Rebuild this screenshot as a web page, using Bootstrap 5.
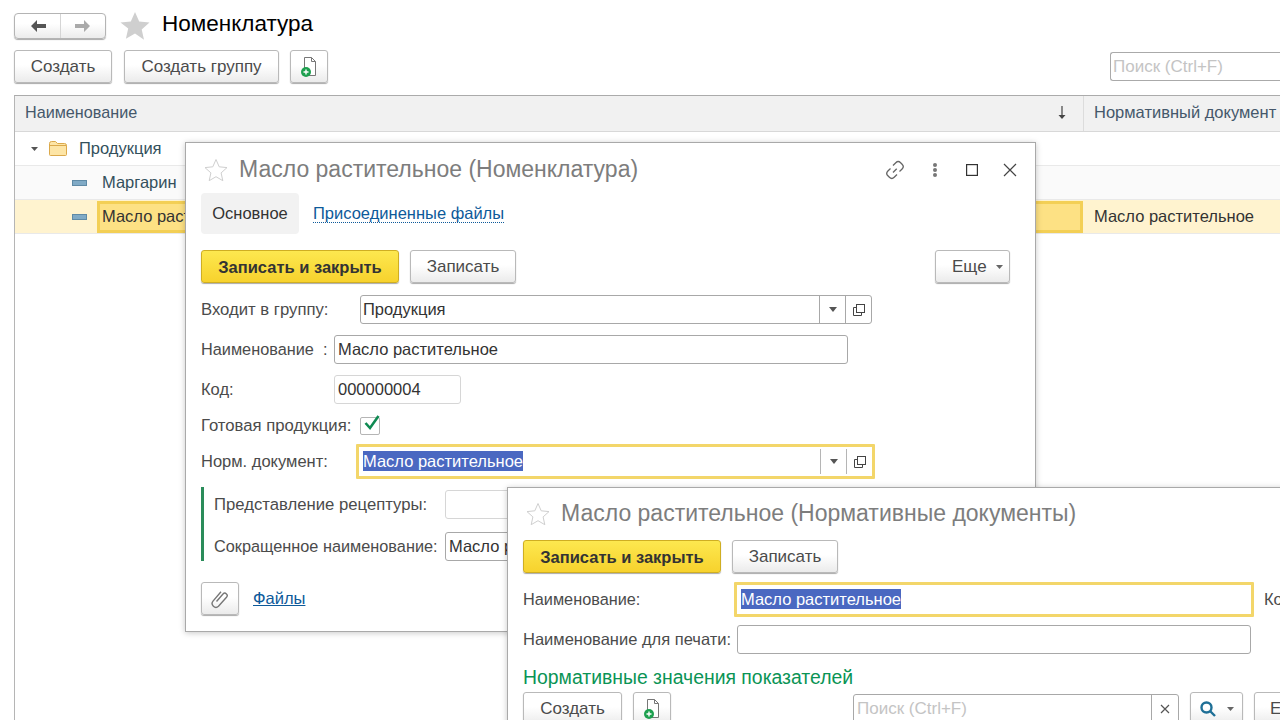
<!DOCTYPE html>
<html lang="ru">
<head>
<meta charset="utf-8">
<title>Номенклатура</title>
<link href="https://cdn.jsdelivr.net/npm/bootstrap@5.3.0/dist/css/bootstrap.min.css" rel="stylesheet">
<style>
html,body{height:720px;overflow:hidden;background:#fff}
body{font-family:"Liberation Sans",Arial,sans-serif;font-size:16.5px;color:#4b4b4b;position:relative}
.pg{padding:13px 0 0 14px;height:720px}
.topbar{height:25px;margin-bottom:12px}
.navpair{width:92px;height:26px;border:1px solid #b4b4b4;border-radius:4px;background:linear-gradient(#fff 40%,#ececec);box-shadow:0 1px 1px #aaa}
.navpair>div{flex:1;height:100%}
.navpair>div:first-child{border-right:1px solid #d5d5d5;flex:0 0 46px}
.pgtitle{font-size:22.5px;color:#000;margin-left:12px;line-height:22px;padding-bottom:4px}
.bstar{margin-left:14px}
.b1c{height:33px;padding:0 16px;border:1px solid #b9b9b9;border-radius:3px;background:linear-gradient(#fff 45%,#ebebeb);box-shadow:0 1px 1px #aaa;color:#4b4b4b;font-size:17px;line-height:32px;white-space:nowrap;flex:none}
.b1c:hover{color:#4b4b4b}
.iconb{width:38px;padding:0;display:flex;align-items:center;justify-content:center}
.btn-save{background:linear-gradient(#fde84f,#f7d22d);border-color:#cfae22;color:#333;font-weight:700;font-size:16.5px;padding:0;width:198px}
.toolrow{height:33px;margin-bottom:12px;padding-right:0}
.srch{width:170px;height:29px;margin-left:auto;margin-top:2px;border:1px solid #aaa;border-right:0;border-radius:3px 0 0 3px;color:#c4c4c4;padding-left:2px;line-height:27px;font-size:17px;white-space:nowrap}
.grid{border-left:1px solid #b5b5b5;border-top:1px solid #ababab;height:640px}
.ghead{height:36px;background:#f1f1f1;border-bottom:1px solid #d8d8d8;color:#45586b}
.gc1{width:1068px;flex:none;padding-left:10px;position:relative}
.gc2{flex:1;padding-left:10px;white-space:nowrap;border-left:1px solid #dcdcdc}
.ghead>div{line-height:32px;height:100%}
.ghead>.gc1{font-size:16.2px}
.grow{height:34px;line-height:32px;border-bottom:1px solid #e9e9e9;color:#33505c}
.grow .gc1>span{padding-bottom:2px}
.grow.alt{background:#fafafa}
.grow.sel{background:#fff3cf;color:#333}
.grow.sel .gc1{padding:0;height:33px}
.grow.sel .gc2{line-height:33px;padding-left:11px}
.selcell{margin-left:82px;width:986px;height:32px;background:#fde184;border:3px solid #f3cf55;line-height:25px;padding-left:2px}
.sortar{position:absolute;right:16px;top:10px}
.gtree1{padding-left:15px;display:flex;align-items:center;gap:0}
.gtree2{padding-left:57px;display:flex;align-items:center}
.win{position:absolute;background:#fff;border:1px solid #a9a9a9;box-shadow:0 1px 6px rgba(0,0,0,.22)}
.w1{left:185px;top:142px;width:851px;height:490px;padding:14px 15px 0;z-index:2}
.w2{left:507px;top:487px;width:800px;height:300px;padding:13px 15px 0;z-index:3}
.whead{height:26px}
.wtitle{font-size:23px;color:#7d7d7d;margin-left:11px;line-height:22px;white-space:nowrap;padding-bottom:3px}
.wtools{margin-left:auto;margin-right:3px;gap:0}
.wtab{width:98px;height:41px;background:#f2f2f2;border-radius:4px;color:#333;line-height:41px;text-align:center}
.wlink{color:#0d5a9a;text-decoration:none;border-bottom:1px dotted #0d5a9a;line-height:18px;margin-left:14px}
.tabrow{margin-top:10px;margin-bottom:16px}
.wbtns{gap:11px;height:33px;margin-bottom:12px}
.w2 .wbtns{margin-top:13px;margin-bottom:9px}
.frow{display:flex;align-items:center;height:29px;margin-bottom:11px;white-space:nowrap}
.flab{flex:none}
.lab-narrow{font-size:16.3px}
.lab-wide{font-size:16.7px}
.lab-chk{padding-top:2px}
.l133{width:133px}.l159{width:159px}
.inp{height:29px;border:1px solid #a8a8a8;border-radius:3px;padding-left:3px;line-height:27px;color:#333;display:flex;background:#fff;flex:none}
.inp.tight{padding-left:2px}
.inp.soft{border-color:#d6d6d6}
.inp>span.t{flex:1}
.seg{width:26px;border-left:1px solid #a8a8a8;flex:none;display:flex;align-items:center;justify-content:center}
.focus{height:35px;border:3px solid #f3d66a;border-radius:1px;padding-left:4px;line-height:29px;color:#333;display:flex;flex:none;background:#fff}
.focus>span.t{flex:1}
.focus .seg{border-left-color:#b5b5b5;margin:2px 0 2px;height:auto}
.selt{background:#4a68c1;color:#fff;line-height:20px;align-self:center;margin-bottom:2px}
.chk{width:20px;height:18px;border:1px solid #b5b5b5;border-radius:2px;position:relative;flex:none;margin-top:2px}
.chk svg{position:absolute;left:1px;top:-5px}
.gbox{border-left:3px solid #2a8c5a;padding-left:10px;margin-top:8px;height:74px;padding-top:3px}
.gbox .frow{margin-bottom:13px}
.l231{width:231px}
.foot{margin-top:21px;height:33px;gap:14px}
.flink{color:#0d5a9a;text-decoration:underline}
.ghd{color:#0a9455;font-size:19.4px;line-height:20px;margin-top:13px;white-space:nowrap}
.w2 .r1{height:35px;margin-bottom:8px}
.w2 .r2{margin-bottom:0}
.l211{width:211px}
.l214{width:214px}
.lastr{margin-top:5px;height:33px;gap:11px}
.srch2{width:326px;margin-left:171px;margin-top:2px;flex:none}
.srch2 .t{color:#c4c4c4;font-size:17px}
.seg2{width:27px}
.bsrch{width:53px;padding:0;display:flex;align-items:center;justify-content:center;gap:10px}
.kod{margin-left:10px;color:#4b4b4b}
.eshe{margin-left:auto;margin-right:10px;width:75px;padding:0 0 0 16px;display:flex;align-items:center;gap:9px}
.btn-a{width:98px;padding:0;margin-right:12px}
.btn-b{width:155px;padding:0;margin-right:11px}
</style>
</head>
<body>
<div class="pg">
  <div class="d-flex align-items-center topbar">
    <div class="d-flex navpair">
      <div class="d-flex align-items-center justify-content-center"><svg width="18" height="14" viewBox="0 0 18 14"><path d="M8 1 2 7l6 6V9h9V5H8z" fill="#555"/></svg></div>
      <div class="d-flex align-items-center justify-content-center"><svg width="18" height="14" viewBox="0 0 18 14"><path d="M10 1l6 6-6 6V9H1V5h9z" fill="#aaa"/></svg></div>
    </div>
    <svg class="bstar" width="30" height="30" viewBox="0 0 30 30"><path d="M15 1l4.200 9.600 10.300 1-7.800 6.900 2.300 10.200L15 22.400 5.900 27.700l2.300-10.200L.5 11.600l10.300-1z" fill="#cfcfcf"/></svg>
    <div class="pgtitle">Номенклатура</div>
  </div>
  <div class="d-flex toolrow">
    <a class="btn b1c btn-a">Создать</a>
    <a class="btn b1c btn-b">Создать группу</a>
    <a class="btn b1c iconb"><svg width="18" height="22" viewBox="0 0 18 22"><path d="M4.500 1.500h7l4 4v14h-11z" fill="#fff" stroke="#777"/><path d="M11.500 1.500v4h4" fill="none" stroke="#777"/><circle cx="6" cy="16" r="5" fill="#1ea04f"/><path d="M3.500 16h5M6 13.500v5" stroke="#fff" stroke-width="1.400"/></svg></a>
    <div class="srch">Поиск (Ctrl+F)</div>
  </div>
  <div class="grid">
    <div class="d-flex ghead">
      <div class="gc1">Наименование<svg class="sortar" width="10" height="14" viewBox="0 0 10 14"><path d="M5 0v11" stroke="#444" stroke-width="1.200"/><path d="M1.500 9h7L5 13z" fill="#444"/></svg></div>
      <div class="gc2">Нормативный документ</div>
    </div>
    <div class="d-flex grow">
      <div class="gc1 gtree1"><svg width="10" height="6" viewBox="0 0 10 6"><path d="M1 1h7L4.500 5z" fill="#555"/></svg><svg style="margin-left:8px" width="20" height="17" viewBox="0 0 20 17"><path d="M1.500 3.500q0-2 2-2h4l2 2h7q2 0 2 2v9q0 1-1 1h-15q-1 0-1-1z" fill="#fde5a6" stroke="#dba94b"/><path d="M1.500 5.500h17" stroke="#dba94b"/></svg><span style="margin-left:11px">Продукция</span></div>
    </div>
    <div class="d-flex grow alt">
      <div class="gc1 gtree2"><svg width="15" height="6" viewBox="0 0 15 6"><rect x=".5" y=".5" width="14" height="5" fill="#80aac6" stroke="#5f8aa6"/></svg><span style="margin-left:15px">Маргарин</span></div>
    </div>
    <div class="d-flex grow sel">
      <div class="gc1 d-flex align-items-center"><svg style="margin-left:57px;margin-right:10px;flex:none" width="15" height="6" viewBox="0 0 15 6"><rect x=".5" y=".5" width="14" height="5" fill="#80aac6" stroke="#5f8aa6"/></svg><div class="selcell" style="margin-left:0">Масло растительное</div></div>
      <div class="gc2" style="border:0">Масло растительное</div>
    </div>
  </div>
</div>

<div class="win w1">
  <div class="d-flex align-items-center whead" style="padding-left:3px">
    <svg width="24" height="24" viewBox="0 0 24 24"><path d="M12 1.500l3.200 7.300 7.800.8-5.900 5.300 1.700 7.800L12 18.700l-6.800 4 1.700-7.800L1 9.600l7.800-.8z" fill="#fff" stroke="#cfcfcf"/></svg>
    <div class="wtitle">Масло растительное (Номенклатура)</div>
    <div class="d-flex align-items-center wtools">
      <svg width="20" height="20" viewBox="0 0 20 20" fill="none" stroke="#666" stroke-width="1.300"><path d="M8 5.500l2.800-2.800a3.400 3.400 0 0 1 4.800 0l1.500 1.500a3.400 3.400 0 0 1 0 4.800L14.500 11.500"/><path d="M11.700 8.700 8 12.500"/><path d="M12 14.500l-2.800 2.800a3.400 3.400 0 0 1-4.800 0l-1.500-1.500a3.400 3.400 0 0 1 0-4.800L5.500 8.500"/></svg>
      <svg style="margin-left:27px" width="6" height="16" viewBox="0 0 6 16"><circle cx="3" cy="3" r="2" fill="#777"/><circle cx="3" cy="8" r="2" fill="#777"/><circle cx="3" cy="13" r="2" fill="#777"/></svg>
      <svg style="margin-left:28px" width="12" height="12" viewBox="0 0 12 12"><rect x=".6" y=".6" width="10.800" height="10.800" fill="none" stroke="#333" stroke-width="1.200"/></svg>
      <svg style="margin-left:25px" width="14" height="14" viewBox="0 0 14 14"><path d="M1 1l12 12M13 1 1 13" stroke="#444" stroke-width="1.200"/></svg>
    </div>
  </div>
  <div class="d-flex align-items-center tabrow">
    <div class="wtab">Основное</div>
    <a class="wlink" href="#">Присоединенные файлы</a>
  </div>
  <div class="d-flex wbtns">
    <a class="btn b1c btn-save">Записать и закрыть</a>
    <a class="btn b1c" style="width:106px;padding:0">Записать</a>
    <a class="btn b1c eshe"><span>Еще</span><svg width="7" height="4" viewBox="0 0 7 4"><path d="M0 0h7L3.500 4z" fill="#666"/></svg></a>
  </div>
  <div class="frow"><div class="flab l159 lab-wide">Входит в группу:</div>
    <div class="inp tight" style="width:512px"><span class="t">Продукция</span><span class="seg"><svg width="8" height="5" viewBox="0 0 8 5"><path d="M0 0h8L4 5z" fill="#555"/></svg></span><span class="seg"><svg width="12" height="12" viewBox="0 0 12 12" fill="none" stroke="#444"><rect x="3.500" y=".5" width="8" height="8"/><path d="M3 3.500H.5v8h8V9"/></svg></span></div></div>
  <div class="frow"><div class="flab l133 lab-narrow">Наименование&nbsp;&nbsp;:</div>
    <div class="inp" style="width:514px"><span class="t">Масло растительное</span></div></div>
  <div class="frow" style="margin-bottom:10px"><div class="flab l133">Код:</div>
    <div class="inp soft" style="width:127px"><span class="t">000000004</span></div></div>
  <div class="frow" style="height:22px;margin-bottom:8px"><div class="flab l159 lab-wide lab-chk">Готовая продукция:</div>
    <div class="chk"><svg width="20" height="20" viewBox="0 0 20 20"><path d="M3.500 10l4.500 5 8.500-12" fill="none" stroke="#0f8a52" stroke-width="2.600"/></svg></div></div>
  <div class="frow" style="height:35px;margin-bottom:0"><div class="flab" style="width:155px">Норм. документ:</div>
    <div class="focus" style="width:519px"><span class="t d-flex"><span class="selt">Масло растительное</span></span><span class="seg"><svg width="8" height="5" viewBox="0 0 8 5"><path d="M0 0h8L4 5z" fill="#555"/></svg></span><span class="seg"><svg width="12" height="12" viewBox="0 0 12 12" fill="none" stroke="#444"><rect x="3.500" y=".5" width="8" height="8"/><path d="M3 3.500H.5v8h8V9"/></svg></span></div></div>
  <div class="gbox">
    <div class="frow"><div class="flab l231 lab-wide">Представление рецептуры:</div><div class="inp soft" style="width:200px"></div></div>
    <div class="frow"><div class="flab l231 lab-narrow">Сокращенное наименование:</div><div class="inp" style="width:200px"><span class="t">Масло растительное</span></div></div>
  </div>
  <div class="d-flex align-items-center foot">
    <a class="btn b1c iconb"><svg width="20" height="20" viewBox="0 0 20 20" fill="none" stroke="#777" stroke-width="1.400"><path d="M6.500 12.500 13 5a2.400 2.400 0 0 1 3.500 3.300l-8 9a3.800 3.800 0 0 1-5.500-5.200l8-9.300"/></svg></a>
    <a class="flink" href="#">Файлы</a>
  </div>
</div>

<div class="win w2">
  <div class="d-flex align-items-center whead" style="padding-left:3px">
    <svg width="24" height="24" viewBox="0 0 24 24"><path d="M12 1.500l3.200 7.300 7.800.8-5.900 5.300 1.700 7.800L12 18.700l-6.800 4 1.700-7.800L1 9.600l7.800-.8z" fill="#fff" stroke="#cfcfcf"/></svg>
    <div class="wtitle">Масло растительное (Нормативные документы)</div>
  </div>
  <div class="d-flex wbtns">
    <a class="btn b1c btn-save">Записать и закрыть</a>
    <a class="btn b1c" style="width:106px;padding:0">Записать</a>
  </div>
  <div class="frow r1"><div class="flab l211 lab-narrow">Наименование:</div>
    <div class="focus" style="width:520px"><span class="t d-flex"><span class="selt">Масло растительное</span></span></div><span class="kod">Код:</span></div>
  <div class="frow r2"><div class="flab l214">Наименование для печати:</div><div class="inp" style="width:514px"></div></div>
  <div class="ghd">Нормативные значения показателей</div>
  <div class="d-flex lastr">
    <a class="btn b1c" style="width:99px;padding:0">Создать</a>
    <a class="btn b1c iconb"><svg width="18" height="22" viewBox="0 0 18 22"><path d="M4.500 1.500h7l4 4v14h-11z" fill="#fff" stroke="#777"/><path d="M11.500 1.500v4h4" fill="none" stroke="#777"/><circle cx="6" cy="16" r="5" fill="#1ea04f"/><path d="M3.500 16h5M6 13.500v5" stroke="#fff" stroke-width="1.400"/></svg></a>
    <div class="inp srch2"><span class="t">Поиск (Ctrl+F)</span><span class="seg seg2"><svg width="10" height="10" viewBox="0 0 10 10"><path d="M1 1l8 8M9 1 1 9" stroke="#555" stroke-width="1.200"/></svg></span></div>
    <a class="btn b1c bsrch"><svg width="18" height="18" viewBox="0 0 18 18" fill="none" stroke="#1e6f96" stroke-width="2.400"><circle cx="7.500" cy="7.500" r="5"/><path d="M11 11l5 5"/></svg><svg width="7" height="4" viewBox="0 0 7 4"><path d="M0 0h7L3.500 4z" fill="#666"/></svg></a>
    <a class="btn b1c" style="padding:0 15px">Еще</a>
  </div>
</div>
<script src="https://cdn.jsdelivr.net/npm/bootstrap@5.3.0/dist/js/bootstrap.bundle.min.js"></script>
</body>
</html>
